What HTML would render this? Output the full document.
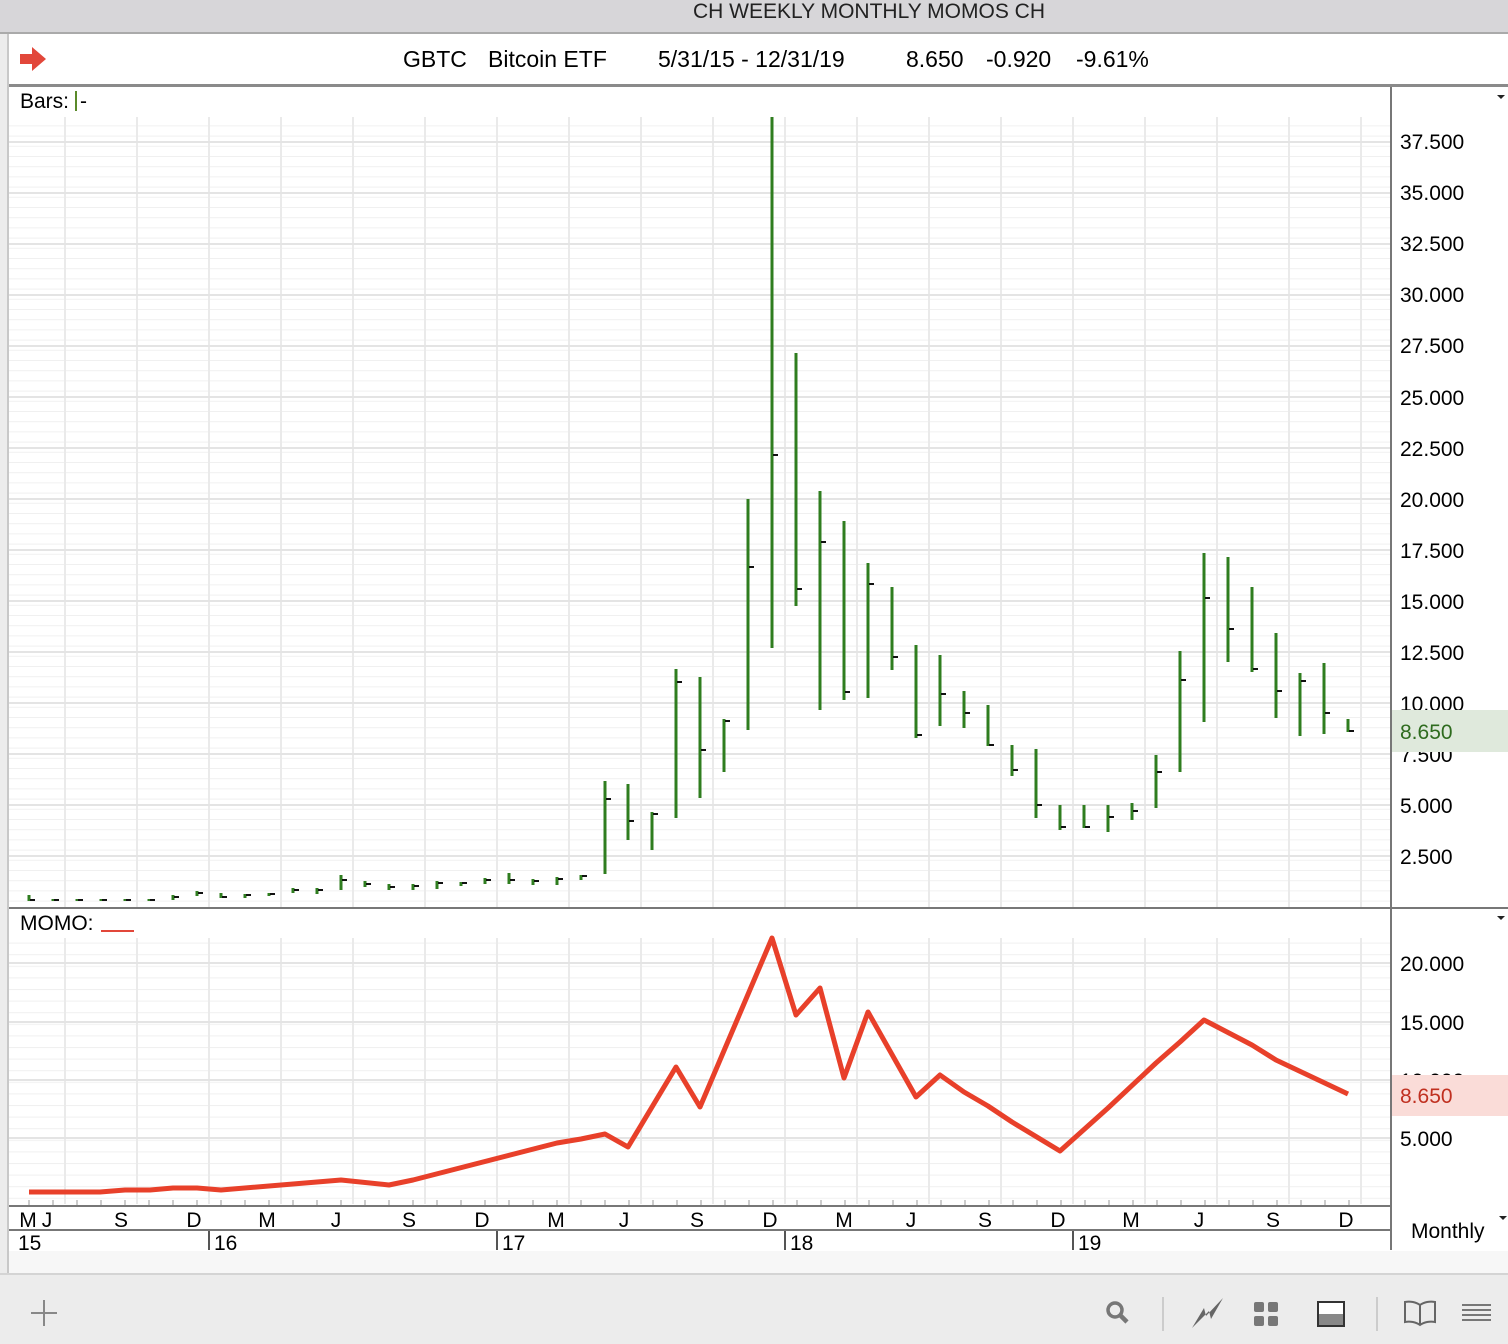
<!DOCTYPE html>
<html><head><meta charset="utf-8"><style>
html,body{margin:0;padding:0;width:1508px;height:1344px;overflow:hidden;background:#fff;font-family:"Liberation Sans",Arial,sans-serif}
</style></head><body>
<svg width="1508" height="1344" style="position:absolute;left:0;top:0" font-family="Liberation Sans, Arial, sans-serif">
<defs>
<pattern id="hg" x="0" y="0" width="10" height="10.2" patternUnits="userSpaceOnUse" patternTransform="translate(0,3)"><rect width="10" height="1" fill="#f0f0f0"/></pattern>
<pattern id="hg2" x="0" y="0" width="10" height="11.6" patternUnits="userSpaceOnUse" patternTransform="translate(0,3)"><rect width="10" height="1" fill="#f0f0f0"/></pattern>
</defs>
<rect x="0" y="0" width="1508" height="32" fill="#d7d6d9"/>
<rect x="0" y="32" width="1508" height="2" fill="#aaa"/>
<text x="869" y="18" font-size="21" text-anchor="middle" fill="#222">CH WEEKLY MONTHLY MOMOS CH</text>
<rect x="0" y="34" width="8" height="1240" fill="#ececec"/>
<rect x="7" y="34" width="2" height="1240" fill="#c8c8c8"/>
<path d="M20 54 h12 v-7 l14 12 l-14 12 v-7 h-12z" fill="#e2473a"/>
<g font-size="23">
<text x="403" y="67">GBTC</text>
<text x="488" y="67">Bitcoin ETF</text>
<text x="658" y="67">5/31/15 - 12/31/19</text>
<text x="906" y="67">8.650</text>
<text x="986" y="67">-0.920</text>
<text x="1076" y="67">-9.61%</text>
</g>
<rect x="9" y="84" width="1499" height="3" fill="#8a8a8a"/>
<rect x="9" y="117" width="1381" height="790" fill="url(#hg)"/>
<rect x="9" y="938" width="1381" height="266" fill="url(#hg2)"/>
<g fill="#eaeaea">
<rect x="64" y="117" width="2" height="790"/><rect x="136" y="117" width="2" height="790"/><rect x="208" y="117" width="2" height="790"/><rect x="280" y="117" width="2" height="790"/><rect x="352" y="117" width="2" height="790"/><rect x="424" y="117" width="2" height="790"/><rect x="496" y="117" width="2" height="790"/><rect x="568" y="117" width="2" height="790"/><rect x="640" y="117" width="2" height="790"/><rect x="712" y="117" width="2" height="790"/><rect x="784" y="117" width="2" height="790"/><rect x="856" y="117" width="2" height="790"/><rect x="928" y="117" width="2" height="790"/><rect x="1000" y="117" width="2" height="790"/><rect x="1072" y="117" width="2" height="790"/><rect x="1144" y="117" width="2" height="790"/><rect x="1216" y="117" width="2" height="790"/><rect x="1288" y="117" width="2" height="790"/><rect x="1360" y="117" width="2" height="790"/>
<rect x="64" y="938" width="2" height="266"/><rect x="136" y="938" width="2" height="266"/><rect x="208" y="938" width="2" height="266"/><rect x="280" y="938" width="2" height="266"/><rect x="352" y="938" width="2" height="266"/><rect x="424" y="938" width="2" height="266"/><rect x="496" y="938" width="2" height="266"/><rect x="568" y="938" width="2" height="266"/><rect x="640" y="938" width="2" height="266"/><rect x="712" y="938" width="2" height="266"/><rect x="784" y="938" width="2" height="266"/><rect x="856" y="938" width="2" height="266"/><rect x="928" y="938" width="2" height="266"/><rect x="1000" y="938" width="2" height="266"/><rect x="1072" y="938" width="2" height="266"/><rect x="1144" y="938" width="2" height="266"/><rect x="1216" y="938" width="2" height="266"/><rect x="1288" y="938" width="2" height="266"/><rect x="1360" y="938" width="2" height="266"/>
</g>
<g fill="#e4e4e4">
<rect x="9" y="141" width="1381" height="2"/><rect x="9" y="192" width="1381" height="2"/><rect x="9" y="243" width="1381" height="2"/><rect x="9" y="294" width="1381" height="2"/><rect x="9" y="345" width="1381" height="2"/><rect x="9" y="396" width="1381" height="2"/><rect x="9" y="447" width="1381" height="2"/><rect x="9" y="498" width="1381" height="2"/><rect x="9" y="549" width="1381" height="2"/><rect x="9" y="600" width="1381" height="2"/><rect x="9" y="651" width="1381" height="2"/><rect x="9" y="702" width="1381" height="2"/><rect x="9" y="753" width="1381" height="2"/><rect x="9" y="804" width="1381" height="2"/><rect x="9" y="855" width="1381" height="2"/>
<rect x="9" y="962" width="1381" height="2"/><rect x="9" y="1021" width="1381" height="2"/><rect x="9" y="1079" width="1381" height="2"/><rect x="9" y="1137" width="1381" height="2"/>
</g>
<text x="20" y="108" font-size="21">Bars:</text>
<rect x="75" y="91" width="2" height="20" fill="#5a8a2a"/>
<text x="80" y="108" font-size="21">-</text>
<rect x="9" y="907" width="1499" height="2" fill="#777"/>
<text x="20" y="930" font-size="21">MOMO:</text>
<rect x="101" y="930" width="33" height="2" fill="#e2473a"/>
<rect x="1390" y="87" width="2" height="1163" fill="#777"/>
<path d="M1497 95 h8 l-4 4z M1497 916 h8 l-4 4z M1499 1216 h8 l-4 4z" fill="#222"/>
<g font-size="21" fill="#000">
<text x="1400" y="149">37.500</text><text x="1400" y="200">35.000</text><text x="1400" y="251">32.500</text><text x="1400" y="302">30.000</text><text x="1400" y="353">27.500</text><text x="1400" y="405">25.000</text><text x="1400" y="456">22.500</text><text x="1400" y="507">20.000</text><text x="1400" y="558">17.500</text><text x="1400" y="609">15.000</text><text x="1400" y="660">12.500</text><text x="1400" y="711">10.000</text><text x="1400" y="762">7.500</text><text x="1400" y="813">5.000</text><text x="1400" y="864">2.500</text>
<text x="1400" y="971">20.000</text><text x="1400" y="1030">15.000</text><text x="1400" y="1088">10.000</text><text x="1400" y="1146">5.000</text>
</g>
<rect x="1392" y="710" width="116" height="42" fill="#dfe9dc"/>
<text x="1400" y="739" font-size="21" fill="#2e6b1e">8.650</text>
<rect x="1392" y="1075" width="116" height="41" fill="#fadcd8"/>
<text x="1400" y="1103" font-size="21" fill="#c03020">8.650</text>
<path fill="none" stroke="#2f7d1f" stroke-width="3" d="M29 895V901M53 899V901M77 899V901M101 899V901M125 899V901M149 899V901M173 895V900M197 891V896M221 893V898M245 894V898M269 893V896M293 888V893M317 888V894M341 875V890M365 881V887M389 884V890M413 884V890M437 881V889M461 882V886M485 878V884M509 873V884M533 879V885M557 877V885M581 875V880M605 781V874M628 784V840M652 812V850M676 669V818M700 677V798M724 719V772M748 499V730M772 117V648M796 353V606M820 491V710M844 521V700M868 563V698M892 587V670M916 645V738M940 655V726M964 691V728M988 705V746M1012 745V776M1036 749V818M1060 805V830M1084 805V828M1108 805V832M1132 803V820M1156 755V808M1180 651V772M1204 553V722M1228 557V662M1252 587V672M1276 633V718M1300 673V736M1324 663V734M1348 719V732"/>
<path fill="none" stroke="#111" stroke-width="2" d="M30 900h5M54 900h5M78 900h5M102 900h5M126 900h5M150 900h5M174 897h5M198 893h5M222 897h5M246 895h5M270 894h5M294 890h5M318 890h5M342 880h5M366 884h5M390 887h5M414 886h5M438 883h5M462 883h5M486 880h5M510 880h5M534 881h5M558 879h5M582 876h5M606 799h5M629 821h5M653 814h5M677 682h5M701 750h5M725 721h5M749 567h5M773 455h5M797 589h5M821 542h5M845 692h5M869 584h5M893 657h5M917 735h5M941 694h5M965 713h5M989 745h5M1013 770h5M1037 805h5M1061 827h5M1085 827h5M1109 817h5M1133 811h5M1157 772h5M1181 680h5M1205 598h5M1229 629h5M1253 669h5M1277 691h5M1301 681h5M1325 713h5M1349 731h5"/>
<polyline fill="none" stroke="#e8402a" stroke-width="5" stroke-linejoin="round" points="29,1192 100,1192 125,1190 150,1190 173,1188 197,1188 221,1190 341,1180 389,1185 413,1180 557,1143 581,1139 605,1134 628,1147 676,1067 700,1107 772,938 796,1015 820,988 844,1078 868,1012 916,1097 940,1075 964,1092 988,1106 1012,1122 1060,1151 1108,1108 1156,1063 1180,1042 1204,1020 1252,1045 1276,1060 1348,1094"/>
<rect x="9" y="1205" width="1382" height="2" fill="#777"/>
<rect x="9" y="1229" width="1382" height="2" fill="#777"/>
<path stroke="#999" stroke-width="1" d="M29 1200v5M53 1200v5M77 1200v5M101 1200v5M125 1200v5M149 1200v5M173 1200v5M197 1200v5M221 1200v5M245 1200v5M269 1200v5M293 1200v5M317 1200v5M341 1200v5M365 1200v5M389 1200v5M413 1200v5M437 1200v5M461 1200v5M485 1200v5M509 1200v5M533 1200v5M557 1200v5M581 1200v5M605 1200v5M629 1200v5M653 1200v5M677 1200v5M701 1200v5M725 1200v5M749 1200v5M773 1200v5M797 1200v5M821 1200v5M845 1200v5M869 1200v5M893 1200v5M917 1200v5M941 1200v5M965 1200v5M989 1200v5M1013 1200v5M1037 1200v5M1061 1200v5M1085 1200v5M1109 1200v5M1133 1200v5M1157 1200v5M1181 1200v5M1205 1200v5M1229 1200v5M1253 1200v5M1277 1200v5M1301 1200v5M1325 1200v5M1349 1200v5"/>
<g font-size="21" text-anchor="middle">
<text x="28" y="1227">M</text><text x="47" y="1227">J</text><text x="121" y="1227">S</text><text x="194" y="1227">D</text><text x="267" y="1227">M</text><text x="336" y="1227">J</text><text x="409" y="1227">S</text><text x="482" y="1227">D</text><text x="556" y="1227">M</text><text x="624" y="1227">J</text><text x="697" y="1227">S</text><text x="770" y="1227">D</text><text x="844" y="1227">M</text><text x="911" y="1227">J</text><text x="985" y="1227">S</text><text x="1058" y="1227">D</text><text x="1131" y="1227">M</text><text x="1199" y="1227">J</text><text x="1273" y="1227">S</text><text x="1346" y="1227">D</text>
</g>
<g font-size="21">
<text x="18" y="1250">15</text>
<rect x="208" y="1231" width="2" height="19" fill="#555"/><text x="214" y="1250">16</text>
<rect x="496" y="1231" width="2" height="19" fill="#555"/><text x="502" y="1250">17</text>
<rect x="784" y="1231" width="2" height="19" fill="#555"/><text x="790" y="1250">18</text>
<rect x="1072" y="1231" width="2" height="19" fill="#555"/><text x="1078" y="1250">19</text>
<text x="1411" y="1238">Monthly</text>
</g>
<rect x="9" y="1251" width="1499" height="22" fill="#f7f7f7"/>
<rect x="0" y="1273" width="1508" height="2" fill="#d4d4d4"/>
<rect x="0" y="1275" width="1508" height="69" fill="#ececec"/>
<path d="M44 1300v26M31 1313h26" stroke="#888" stroke-width="2"/>
<circle cx="1115" cy="1310" r="7" fill="none" stroke="#777" stroke-width="3.5"/>
<path d="M1120 1315l7 7" stroke="#777" stroke-width="4.5"/>
<rect x="1162" y="1297" width="2" height="34" fill="#ccc"/>
<path d="M1192 1328l12-20 2 8 17-18-12 21-2-8z" fill="#666"/>
<g fill="#777"><rect x="1254" y="1302" width="10" height="10" rx="2"/><rect x="1268" y="1302" width="10" height="10" rx="2"/><rect x="1254" y="1316" width="10" height="10" rx="2"/><rect x="1268" y="1316" width="10" height="10" rx="2"/></g>
<rect x="1318" y="1302" width="26" height="24" fill="#fff" stroke="#333" stroke-width="2"/>
<rect x="1319" y="1314" width="24" height="11" fill="#888"/>
<rect x="1376" y="1297" width="2" height="34" fill="#ccc"/>
<path d="M1420 1325c-4-3-10-4-15-3v-20c5-1 11 0 15 3c4-3 10-4 15-3v20c-5-1-11 0-15 3zM1420 1305v20" fill="none" stroke="#666" stroke-width="2"/>
<path d="M1462 1305h29M1462 1310h29M1462 1315h29M1462 1320h29" stroke="#777" stroke-width="2"/>
</svg>
</body></html>
